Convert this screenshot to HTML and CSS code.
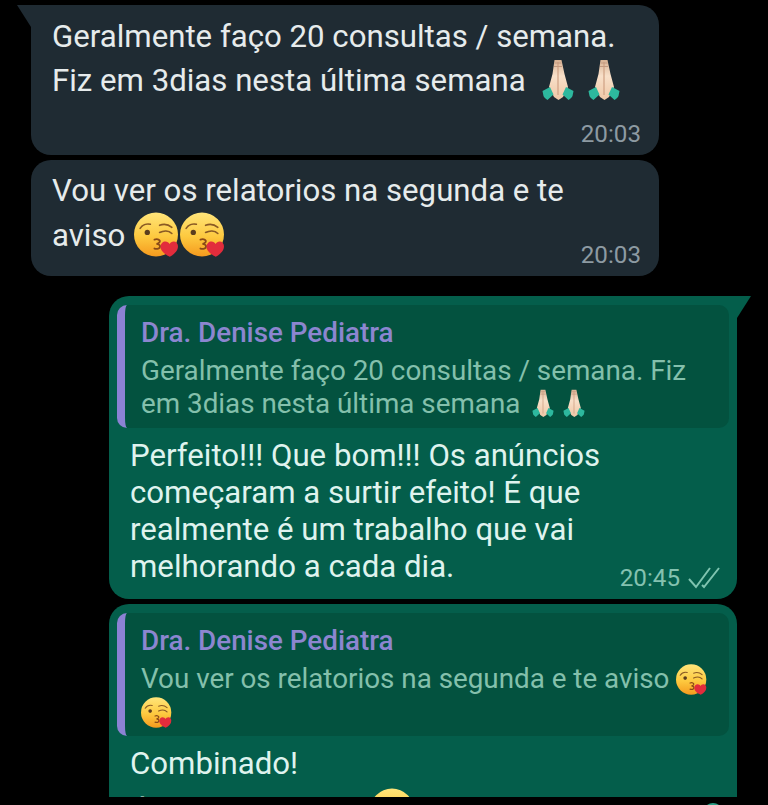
FILE: index.html
```html
<!DOCTYPE html>
<html lang="en">
<head>
    <meta charset="UTF-8">
    <meta name="viewport" content="width=device-width, initial-scale=1.0">
    <title>Conversa</title>
    <link rel="stylesheet" href="styles.css">
</head>
<body>
    <!-- Emoji drawings -->
    <svg class="defs" width="0" height="0">
        <defs>
            <linearGradient id="face" x1="0" y1="0" x2="0" y2="1">
                <stop offset="0%" stop-color="#ffe57a"/>
                <stop offset="55%" stop-color="#fdc93f"/>
                <stop offset="100%" stop-color="#f59a1e"/>
            </linearGradient>
            <linearGradient id="skin" x1="0" y1="0" x2="0" y2="1">
                <stop offset="0%" stop-color="#d8b294"/>
                <stop offset="40%" stop-color="#f8e0c9"/>
                <stop offset="100%" stop-color="#efc7a6"/>
            </linearGradient>
            <symbol id="kiss" viewBox="0 0 44 44">
                <circle cx="21.5" cy="22" r="21.5" fill="url(#face)"/>
                <path d="M6 16c2-3 6-5 10-4" fill="none" stroke="#8a5a24" stroke-width="1.6" stroke-linecap="round"/>
                <circle cx="13" cy="20" r="2.6" fill="#5b3d1e"/>
                <path d="M25 13c4-1.5 9-.5 12 2M25 20c4-2 9-2 12 1" fill="none" stroke="#8a5a24" stroke-width="1.6" stroke-linecap="round"/>
                <path d="M20 27c3-1 6 0 5 2.500-.5 1-1.500 1.500-3 1.700 2 .3 3.500 1 3.500 2.500 0 2.300-3 2.800-5.500 2" fill="none" stroke="#8a4a18" stroke-width="1.8" stroke-linecap="round"/>
                <path d="M35 43.800c-5-2.500-9-5.500-9-10 0-3 2.200-5 4.700-5 1.800 0 3.300 1 4.100 2.400.8-1.400 2.200-2.400 4-2.400 2.500 0 4.200 2 4.200 4.800 0 4.500-3.500 7.700-8 10.200z" fill="#e22c3c"/>
            </symbol>
            <symbol id="pray" viewBox="0 0 44 44">
                <path d="M18.5 1h7l3 14 3.500 13-5 10-4.500 3-4.500-3-5-10 3.500-13z" fill="url(#skin)"/>
                <path d="M22 3v33" stroke="#cfa184" stroke-width="1.2"/>
                <path d="M18.500 4h7M18 7.500h8" stroke="#c39a80" stroke-width="1"/>
                <path d="M6.500 32l7.500-4 3.500 7.500-6 5.500c-2-1.500-3.500-2.500-4-4z" fill="#2db89e"/>
                <path d="M37.500 32l-7.500-4-3.500 7.500 6 5.500c2-1.500 3.500-2.500 4-4z" fill="#2db89e"/>
            </symbol>
        </defs>
    </svg>

    <div class="chat">
        <div class="bubble in tail">
            <p class="line">Geralmente faço 20 consultas / semana.</p>
            <p class="line tall">Fiz em 3dias nesta última semana <span class="hands"><svg class="emoji-pray"><use href="#pray"/></svg><svg class="emoji-pray"><use href="#pray"/></svg></span></p>
            <div class="meta"><span class="time">20:03</span></div>
        </div>
        <div class="bubble in">
            <p class="line">Vou ver os relatorios na segunda e te</p>
            <div class="last-row">
                <p class="line tall">aviso <span class="faces"><svg class="emoji-kiss"><use href="#kiss"/></svg><svg class="emoji-kiss"><use href="#kiss"/></svg></span></p>
                <span class="time">20:03</span>
            </div>
        </div>

        <div class="bubble out tail first-out">
            <div class="quote">
                <div class="quote-name">Dra. Denise Pediatra</div>
                <div class="quote-text">Geralmente faço 20 consultas / semana. Fiz<br>em 3dias nesta última semana <span class="hands-small"><svg class="emoji-pray-small"><use href="#pray"/></svg><svg class="emoji-pray-small"><use href="#pray"/></svg></span></div>
            </div>
            <div class="body">
                <p class="line">Perfeito!!! Que bom!!! Os anúncios</p>
                <p class="line">começaram a surtir efeito! É que</p>
                <p class="line">realmente é um trabalho que vai</p>
                <p class="line">melhorando a cada dia.</p>
                <div class="meta out-meta">
                    <span class="time">20:45</span>
                    <svg class="ticks" viewBox="0 0 32 22"><path d="M1 12l7 8L22 1M14 18l2 2L31 1" fill="none" stroke="#7fc4b0" stroke-width="2"/></svg>
                </div>
            </div>
        </div>

        <div class="bubble out">
            <div class="quote">
                <div class="quote-name">Dra. Denise Pediatra</div>
                <div class="quote-text">Vou ver os relatorios na segunda e te aviso <svg class="emoji-kiss-small"><use href="#kiss"/></svg><br><svg class="emoji-kiss-small"><use href="#kiss"/></svg></div>
            </div>
            <div class="body">
                <p class="line">Combinado!</p>
                <p class="line cut-line">É isso mesmo!!! <svg class="emoji-kiss clipped"><use href="#kiss"/></svg></p>
            </div>
        </div>
    </div>
    <div class="peek"></div>
</body>
</html>
```
FILE: styles.css
```css
html, body {
    margin: 0;
    padding: 0;
    background-color: #000;
}

body {
    position: relative;
    width: 768px;
    height: 805px;
    overflow: hidden;
    font-family: 'Roboto', sans-serif;
    color: #e6ebec;
}

.defs {
    position: absolute;
}

.chat {
    height: 792px;
    padding-top: 5px;
    overflow: hidden;
    display: flex;
    flex-direction: column;
    gap: 5px;
}

.bubble {
    position: relative;
    flex-shrink: 0;
    width: 628px;
    box-sizing: border-box;
    border-radius: 20px;
}

.in {
    margin-left: 31px;
    padding: 12px 18px 7px 21px;
    background-color: #1f2b33;
}

.in.tail {
    padding-top: 13px;
    border-top-left-radius: 0;
}

.out {
    margin-left: 109px;
    padding: 9px 8px 0;
    background-color: #045e4b;
    color: #dff3ee;
}

.first-out {
    margin-top: 15px;
}

.tail::before {
    content: "";
    position: absolute;
    top: 0;
    width: 20px;
    height: 22px;
}

.in.tail::before {
    left: -14px;
    background-color: #1f2b33;
    clip-path: polygon(0 0, 100% 0, 100% 100%, 70% 100%);
}

.out.tail {
    border-top-right-radius: 0;
}

.out.tail::before {
    right: -14px;
    background-color: #045e4b;
    clip-path: polygon(0 0, 100% 0, 30% 100%, 0 100%);
}

.line {
    margin: 0;
    font-size: 31.2px;
    line-height: 37px;
}

.tall {
    height: 51px;
    line-height: 51px;
}

.cut-line {
    margin-top: 6px;
}

.hands {
    display: inline-block;
    height: 44px;
    margin-left: 3px;
    vertical-align: -12px;
    line-height: 0;
}

.emoji-pray {
    width: 44px;
    height: 44px;
    margin-right: 2px;
}

.meta {
    display: flex;
    justify-content: flex-end;
    align-items: center;
    gap: 8px;
    margin-top: 14px;
}

.time {
    font-size: 24.2px;
    line-height: 28px;
    color: #8d9aa2;
}

.last-row {
    display: flex;
    justify-content: space-between;
    align-items: flex-end;
}

.last-row .line {
    margin-bottom: 9px;
    line-height: 54px;
}

.faces {
    display: inline-block;
    height: 45px;
    margin-left: 1px;
    vertical-align: -11px;
    line-height: 0;
}

.emoji-kiss {
    width: 45px;
    height: 45px;
    margin-right: 1px;
}

.clipped {
    margin-left: 12px;
    vertical-align: -8px;
}

.quote {
    height: 123px;
    box-sizing: border-box;
    padding: 11px 12px 0 16px;
    border-left: 8px solid #8c82d4;
    border-radius: 10px;
    background-color: #03523f;
}

.quote-name {
    margin-bottom: 4px;
    font-size: 27.8px;
    font-weight: 500;
    line-height: 34px;
    color: #8c86d0;
}

.quote-text {
    font-size: 27.8px;
    line-height: 33px;
    color: #84c0ac;
}

.hands-small {
    display: inline-block;
    height: 30px;
    line-height: 0;
    vertical-align: -6px;
    margin-left: 1px;
}

.emoji-pray-small {
    width: 30px;
    height: 30px;
    margin-right: 1px;
}

.emoji-kiss-small {
    width: 31px;
    height: 31px;
    vertical-align: -7px;
}

.body {
    padding: 9px 9px 0 13px;
}

.out-meta {
    margin-top: -21px;
    padding-bottom: 7px;
}

.out-meta .time {
    color: #84c2b0;
}

.ticks {
    width: 32px;
    height: 22px;
}

/* Edge of the floating button, cut off by the bottom of the screen */
.peek {
    position: absolute;
    left: 703px;
    top: 803px;
    width: 20px;
    height: 20px;
    border-radius: 50%;
    background-color: #2a9d84;
}
```
